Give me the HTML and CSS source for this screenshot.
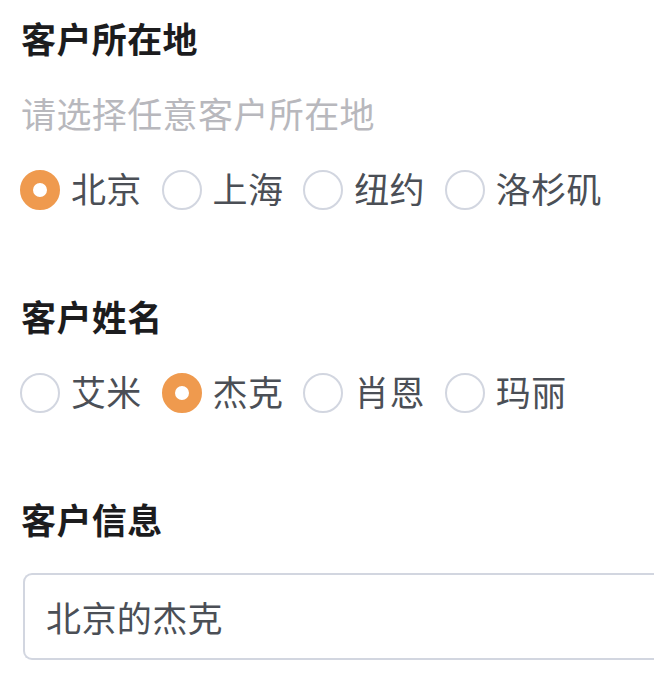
FILE: index.html
```html
<!DOCTYPE html>
<html lang="zh-CN">
<head>
    <meta charset="UTF-8">
    <meta name="viewport" content="width=device-width, initial-scale=1.0">
    <title>客户信息</title>
    <link rel="stylesheet" href="styles.css">
</head>
<body>
    <div class="form">
        <div class="section">
            <div class="section-title">客户所在地</div>
            <div class="hint">请选择任意客户所在地</div>
            <div class="radio-group">
                <label class="radio checked"><span class="dot"></span>北京</label>
                <label class="radio"><span class="dot"></span>上海</label>
                <label class="radio"><span class="dot"></span>纽约</label>
                <label class="radio"><span class="dot"></span>洛杉矶</label>
            </div>
        </div>

        <div class="section">
            <div class="section-title">客户姓名</div>
            <div class="radio-group">
                <label class="radio"><span class="dot"></span>艾米</label>
                <label class="radio checked"><span class="dot"></span>杰克</label>
                <label class="radio"><span class="dot"></span>肖恩</label>
                <label class="radio"><span class="dot"></span>玛丽</label>
            </div>
        </div>

        <div class="section">
            <div class="section-title">客户信息</div>
            <div class="info-box">北京的杰克</div>
        </div>
    </div>
</body>
</html>
```

FILE: styles.css
```css
body {
    margin: 0;
    padding: 0;
    background-color: #ffffff;
    font-family: "Noto Sans CJK SC", "Noto Sans", sans-serif;
}

.form {
    display: flex;
    flex-direction: column;
    gap: 78px;
    padding: 13px 0 0 21px;
}

.section {
    display: flex;
    flex-direction: column;
    gap: 25px;
}

.section-title {
    font-size: 35px;
    font-weight: bold;
    line-height: 50px;
    height: 50px;
    letter-spacing: 0.4px;
    color: #1c1c1e;
}

.hint {
    font-size: 35px;
    line-height: 50px;
    height: 50px;
    letter-spacing: 0.4px;
    color: #b8b8bd;
}

.radio-group {
    display: flex;
    gap: 21px;
    height: 50px;
    align-items: center;
}

.radio {
    display: flex;
    align-items: center;
    gap: 11px;
    font-size: 35px;
    line-height: 50px;
    letter-spacing: 0.3px;
    color: #4b4f56;
    margin-left: -1px;
}

.radio .dot {
    width: 40px;
    height: 40px;
    box-sizing: border-box;
    border: 2px solid #d2d6e0; /* anel cinza */
    border-radius: 50%;
    background-color: #ffffff;
    margin-top: 4px;
}

.radio.checked .dot {
    border: 13px solid #ef9a4e; /* laranja */
}

.info-box {
    margin: 4px 0 0 2px;
    height: 87px;
    box-sizing: border-box;
    border: 2px solid #d2d6e0;
    border-right: none;
    border-radius: 9px 0 0 9px;
    padding-left: 21px;
    display: flex;
    align-items: center;
    font-size: 35px;
    letter-spacing: 0.4px;
    color: #4b4f56;
}
```
